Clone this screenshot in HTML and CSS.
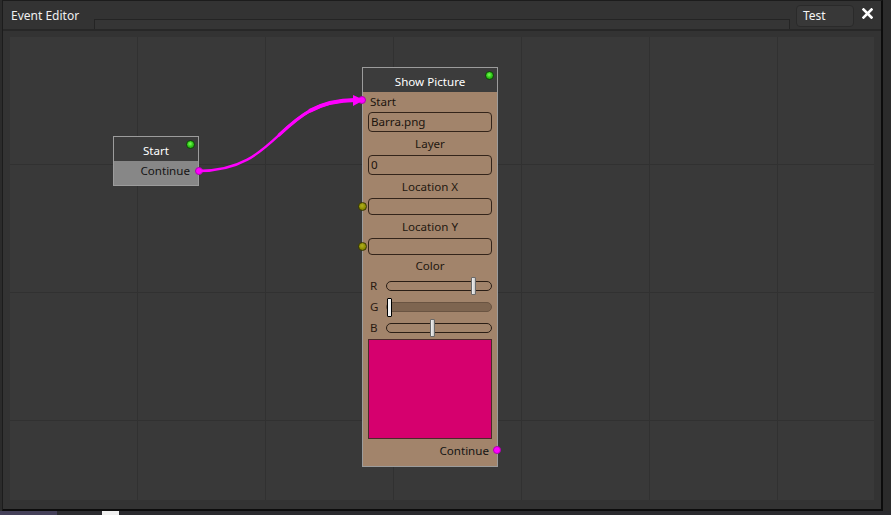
FILE: index.html
```html
<!DOCTYPE html>
<html>
<head>
<meta charset="utf-8">
<link rel="stylesheet" href="styles.css">
</head>
<body>
<div class="screen">
  <div class="window">
    <div class="titlebar">
      <div class="tab">Event Editor</div>
      <div class="groove"></div>
      <div class="btn">Test</div>
      <div class="close">
        <svg width="11" height="11" viewBox="0 0 11 11"><path d="M1.5 1.5 L9.5 9.5 M9.5 1.5 L1.5 9.5" stroke="#fff" stroke-width="2.6" stroke-linecap="square"/></svg>
      </div>
    </div>
    <div class="canvas">
      <svg class="wires" viewBox="10 37 864 463" width="864" height="463">
        <path d="M198 171 C 282 171, 276 100, 356 100" fill="none" stroke="#ff00ff" stroke-width="2.4"/>
        <path d="M278.5 135.5 C 297.5 117.75, 316 100, 356 100" fill="none" stroke="#ff00ff" stroke-width="3.2"/>
        <path d="M309.4 111.1 C 321.4 104.4, 336 100, 356 100" fill="none" stroke="#ff00ff" stroke-width="4"/>
        <polygon points="353,95 364,100 353,106" fill="#ff00ff"/>
      </svg>

      <div class="node node-start">
        <div class="node-head">Start<span class="dot-green"></span></div>
        <div class="start-body">
          <div class="out-row">Continue<span class="dot-pink dot-out"></span></div>
        </div>
      </div>

      <div class="node node-pic">
        <div class="node-head">Show Picture<span class="dot-green"></span></div>
        <div class="pic-body">
          <div class="in-row">Start<span class="dot-pink dot-in"></span></div>
          <div class="field tall">Barra.png</div>
          <div class="label">Layer</div>
          <div class="field tall">0</div>
          <div class="label">Location X</div>
          <div class="field short"><span class="dot-olive"></span></div>
          <div class="label">Location Y</div>
          <div class="field short"><span class="dot-olive"></span></div>
          <div class="label label-color">Color</div>
          <div class="slider-row">
            <span class="ch">R</span>
            <div class="track"><span class="thumb" style="left: 84px"></span></div>
          </div>
          <div class="slider-row">
            <span class="ch">G</span>
            <div class="track track-active"><span class="thumb thumb-active" style="left: 0px"></span></div>
          </div>
          <div class="slider-row">
            <span class="ch">B</span>
            <div class="track"><span class="thumb" style="left: 43px"></span></div>
          </div>
          <div class="swatch"></div>
          <div class="out-row pic-out">Continue<span class="dot-pink dot-out2"></span></div>
        </div>
      </div>
    </div>
  </div>
  <div class="taskbar"><span class="tb-a"></span><span class="tb-b"></span><span class="tb-c"></span></div>
</div>
</body>
</html>
```
FILE: styles.css
```css
* { box-sizing: border-box; }
html, body { margin: 0; padding: 0; }
body {
  background: #2b2b2b;
  font-family: "Noto Sans", "Open Sans", sans-serif;
  font-size: 11.6px;
  width: 891px;
  height: 515px;
  overflow: hidden;
}
.screen { width: 891px; height: 515px; display: flex; flex-direction: column; }
.window {
  margin-left: 2px;
  width: 881px;
  height: 511px;
  background: #333333;
  border-top: 1px solid #1c1c1c;
  border-left: 1px solid #1c1c1c;
  border-right: 2px solid #0c0c0c;
  border-bottom: 2px solid #0c0c0c;
  display: flex;
  flex-direction: column;
}
.titlebar {
  height: 30px;
  display: flex;
  align-items: flex-start;
  border-bottom: 2px solid #272727;
  flex: none;
}
.tab {
  width: 91px;
  padding-left: 8px;
  color: #f0f0f0;
  font-size: 12px;
  line-height: 16px;
  margin-top: 7px;
}
.groove {
  flex: 1;
  align-self: flex-end;
  height: 10px;
  border: 1px solid #242424;
  border-bottom: none;
  background: #353535;
}
.btn {
  margin-left: 6px;
  margin-top: 4px;
  width: 58px;
  height: 22px;
  border-radius: 4px;
  background: #383838;
  border: 1px solid #2a2a2a;
  color: #f4f4f4;
  font-size: 12px;
  padding-left: 6px;
  line-height: 20px;
}
.close {
  margin-left: 8px;
  margin-right: 8px;
  margin-top: 7px;
  width: 11px;
  height: 11px;
  display: flex;
}
.canvas {
  position: relative;
  margin: 6px 0 0 7px;
  width: 864px;
  height: 463px;
  background-color: #393939;
  background-image:
    repeating-linear-gradient(to right, transparent 0 127px, #313131 127px 128px),
    repeating-linear-gradient(to bottom, transparent 0 127px, #313131 127px 128px);
  background-position: 0 0;
}
.wires { position: absolute; left: 0; top: 0; z-index: 2; pointer-events: none; }
.node {
  position: absolute;
  border: 1px solid #9c9c9c;
  display: flex;
  flex-direction: column;
}
.node-head {
  position: relative;
  height: 24px;
  flex: none;
  background: #3c3c3c;
  color: #ffffff;
  text-align: center;
  line-height: 27px;
}
.dot-green {
  position: absolute;
  width: 9px; height: 9px;
  border-radius: 50%;
  right: 3px; top: 3px;
  background: radial-gradient(circle at 45% 40%, #7dff5a 0, #33cc1a 45%, #168a0a 100%);
  border: 1px solid #0d4a06;
}
.node-start { left: 103px; top: 99px; width: 86px; height: 50px; }
.start-body { flex: 1; background: #878787; }
.out-row {
  position: relative;
  text-align: right;
  padding-right: 8px;
  color: #141414;
  line-height: 20px;
}
.dot-pink {
  position: absolute;
  width: 8px; height: 8px;
  border-radius: 50%;
  background: #ff00ff;
  border: 1px solid #b000b0;
}
.dot-out { right: -5px; top: 6px; }
.node-pic { left: 352px; top: 30px; width: 136px; height: 400px; }
.pic-body { flex: 1; background: #a2846b; padding: 0 5px; display: flex; flex-direction: column; }
.in-row {
  position: relative;
  height: 20px;
  line-height: 19px;
  padding-left: 2px;
  color: #1c140e;
}
.dot-in { left: -10px; top: 4px; }
.field {
  position: relative;
  border: 1px solid #33241a;
  border-radius: 4px;
  padding-left: 2px;
  color: #1c140e;
  flex: none;
}
.tall { height: 20px; line-height: 18px; }
.short { height: 17px; }
.dot-olive {
  position: absolute;
  left: -11px; top: 3px;
  width: 9px; height: 9px;
  border-radius: 50%;
  background: radial-gradient(circle at 45% 40%, #b0b020 0, #8a8a00 60%, #5a5a00 100%);
  border: 1px solid #3a3a00;
}
.label {
  height: 23px;
  line-height: 24px;
  text-align: center;
  color: #221810;
  flex: none;
}
.label-color { height: 20px; line-height: 22px; }
.slider-row {
  height: 21px;
  display: flex;
  align-items: center;
  flex: none;
}
.ch { width: 18px; padding-left: 2px; color: #2a1a12; line-height: 21px; }
.track {
  position: relative;
  flex: 1;
  height: 10px;
  border: 1px solid #2a1e16;
  border-radius: 5px;
}
.track-active { background: #7e6550; border-color: #6a5442; }
.thumb {
  position: absolute;
  top: -5px;
  width: 5px;
  height: 18px;
  background: linear-gradient(to right, #f2f2f2, #c8c8c8);
  border: 1px solid #6a6a6a;
  border-radius: 1px;
}
.thumb-active { border-color: #000; top: -5px; height: 19px; background: #f4f4f4; }
.swatch {
  margin-top: 1px;
  height: 100px;
  background: #d6006e;
  border: 1px solid #4a2a2a;
  flex: none;
}
.pic-out { padding-top: 5px; line-height: 14px; padding-right: 3px; }
.dot-out2 { right: -9px; top: 7px; }
.taskbar { height: 4px; display: flex; background: #2a2a2e; }
.tb-a { width: 57px; background: #45415a; }
.tb-b { width: 45px; background: #2c2c30; }
.tb-c { width: 17px; background: #f0f0f0; }
```
